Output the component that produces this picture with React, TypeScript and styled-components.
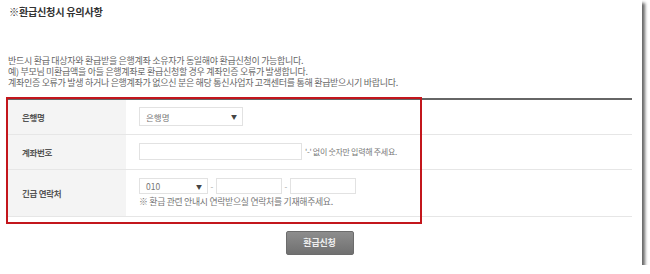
import React from 'react';
import styled, { createGlobalStyle } from 'styled-components';

const GlobalStyle = createGlobalStyle`
  html, body {
    margin: 0;
    padding: 0;
    background: #ffffff;
  }
  body {
    font-family: "Noto Sans CJK KR", "Noto Sans", sans-serif;
    color: #555555;
  }
`;

const Sheet = styled.div`
  position: relative;
  box-sizing: border-box;
  width: 642px;
  height: 265px;
  padding: 5px 10px 0 7px;
  background: #ffffff;
  box-shadow: 3px 3px 3px rgba(0, 0, 0, 0.6);
`;

const Title = styled.h2`
  margin: 0 0 0 2px;
  font-size: 10.2px;
  line-height: 14px;
  font-weight: 700;
  letter-spacing: -0.3px;
  color: #333333;
`;

const Notice = styled.div`
  margin-top: 36px;
  padding-left: 1px;
  font-size: 9px;
  line-height: 11px;
  letter-spacing: -0.3px;
  color: #666666;
`;

const FormTable = styled.table`
  width: 625px;
  margin-top: 10px;
  border-collapse: collapse;
  border-top: 2px solid #666666;
`;

const Row = styled.tr<{ $height: number }>`
  height: ${p => p.$height}px;
  border-bottom: 1px solid #e6e6e6;
`;

const Label = styled.th`
  width: 104px;
  padding: 0 0 0 15px;
  background: #f4f4f4;
  text-align: left;
  font-size: 8.5px;
  font-weight: 700;
  letter-spacing: -0.3px;
  color: #555555;
`;

const Cell = styled.td`
  padding: 0 0 0 13px;
  vertical-align: middle;
`;

const Line = styled.div`
  display: flex;
  align-items: center;
`;

const Select = styled.div<{ $width: number }>`
  box-sizing: border-box;
  display: flex;
  align-items: center;
  justify-content: space-between;
  width: ${p => p.$width}px;
  height: ${p => (p.$width > 80 ? 19 : 16)}px;
  padding: 0 5px 0 6px;
  border: 1px solid #e2e2e2;
  background: #ffffff;
  font-size: 8.5px;
  color: #777777;
`;

const Caret = styled.span`
  font-size: 6px;
  color: #444444;
`;

const Input = styled.div<{ $width: number }>`
  box-sizing: border-box;
  width: ${p => p.$width}px;
  height: ${p => (p.$width > 100 ? 17 : 16)}px;
  border: 1px solid #e2e2e2;
  background: #ffffff;
`;

const Dash = styled.span`
  width: 8px;
  text-align: center;
  font-size: 8px;
  color: #999999;
`;

const Hint = styled.span`
  margin-left: 3px;
  font-size: 8px;
  letter-spacing: -0.3px;
  color: #777777;
`;

const Help = styled.div`
  margin-top: 2px;
  font-size: 8.9px;
  line-height: 11px;
  letter-spacing: -0.3px;
  color: #777777;
`;

const Actions = styled.div`
  display: flex;
  justify-content: center;
  width: 625px;
  margin-top: 14px;
`;

const SubmitButton = styled.button`
  width: 68px;
  height: 24px;
  padding: 0;
  border: 1px solid #6c6c6c;
  border-radius: 2px;
  background: linear-gradient(#8d8d8d, #707070);
  color: #eeeeee;
  font-family: inherit;
  font-size: 9px;
  font-weight: 700;
  letter-spacing: -0.2px;
`;

const Highlight = styled.div`
  position: absolute;
  left: 6px;
  top: 97px;
  width: 416px;
  height: 127px;
  box-sizing: border-box;
  border: 2px solid #c3161c;
  pointer-events: none;
`;

export default function App() {
  return (
    <>
      <GlobalStyle />
      <Sheet>
        <Title>※환급신청시 유의사항</Title>
        <Notice>
          <div>반드시 환급 대상자와 환급받을 은행계좌 소유자가 동일해야 환급신청이 가능합니다.</div>
          <div>예) 부모님 미환급액을 아들 은행계좌로 환급신청할 경우 계좌인증 오류가 발생합니다.</div>
          <div>계좌인증 오류가 발생 하거나 은행계좌가 없으신 분은 해당 통신사업자 고객센터를 통해 환급받으시기 바랍니다.</div>
        </Notice>
        <FormTable>
          <tbody>
            <Row $height={35}>
              <Label>은행명</Label>
              <Cell>
                <Select $width={104}>
                  <span>은행명</span>
                  <Caret>▼</Caret>
                </Select>
              </Cell>
            </Row>
            <Row $height={35}>
              <Label>계좌번호</Label>
              <Cell>
                <Line>
                  <Input $width={163} />
                  <Hint>'-' 없이 숫자만 입력해 주세요.</Hint>
                </Line>
              </Cell>
            </Row>
            <Row $height={47}>
              <Label>긴급 연락처</Label>
              <Cell>
                <Line>
                  <Select $width={69}>
                    <span>010</span>
                    <Caret>▼</Caret>
                  </Select>
                  <Dash>-</Dash>
                  <Input $width={66} />
                  <Dash>-</Dash>
                  <Input $width={66} />
                </Line>
                <Help>※ 환급 관련 안내시 연락받으실 연락처를 기재해주세요.</Help>
              </Cell>
            </Row>
          </tbody>
        </FormTable>
        <Actions>
          <SubmitButton>환급신청</SubmitButton>
        </Actions>
        <Highlight />
      </Sheet>
    </>
  );
}
